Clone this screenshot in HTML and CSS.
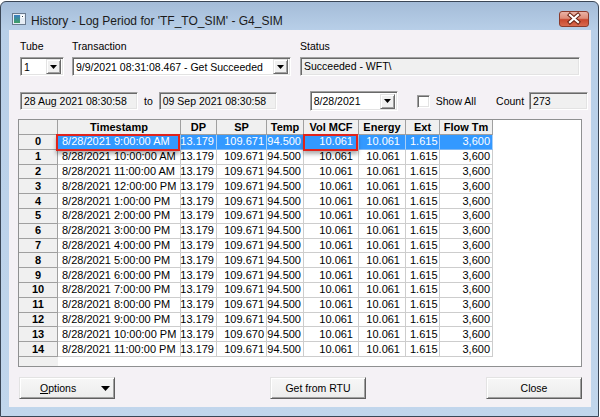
FILE: index.html
```html
<!DOCTYPE html>
<html>
<head>
<meta charset="utf-8">
<title>History</title>
<link rel="stylesheet" href="styles.css">
</head>
<body>
<div class="window">
  <div class="titlebar">
    <svg class="app-icon" width="14" height="12" viewBox="0 0 14 12">
      <defs>
        <linearGradient id="ig" x1="0" y1="0" x2="0" y2="1">
          <stop offset="0" stop-color="#3b7fc4"/>
          <stop offset="1" stop-color="#3f9f63"/>
        </linearGradient>
      </defs>
      <rect x="0.5" y="0.5" width="13" height="11" fill="#e6edf5" stroke="#6a7a8e"/>
      <rect x="2" y="2" width="6" height="8" fill="url(#ig)"/>
      <rect x="9" y="2" width="3" height="3" fill="#ffffff"/>
      <rect x="10" y="3" width="1" height="1" fill="#334455"/>
    </svg>
    <span class="title">History - Log Period for 'TF_TO_SIM' - G4_SIM</span>
    <div class="close-btn">
      <svg width="30" height="16" viewBox="0 0 30 16">
        <path d="M11 4 L19 11 M19 4 L11 11" stroke="#6b2416" stroke-width="4.2" stroke-linecap="square"/>
        <path d="M11 4 L19 11 M19 4 L11 11" stroke="#ffffff" stroke-width="2.2" stroke-linecap="square"/>
      </svg>
    </div>
  </div>

  <div class="client">
    <div class="row-top">
      <div class="field">
        <span class="label">Tube</span>
        <div class="combo w-tube"><span class="val">1</span><span class="dd"><svg width="7" height="4" viewBox="0 0 7 4"><path d="M0 0 H7 L3.5 4 Z" fill="#000"/></svg></span></div>
      </div>
      <div class="field f-trans">
        <span class="label">Transaction</span>
        <div class="combo w-trans"><span class="val">9/9/2021 08:31:08.467 - Get Succeeded</span><span class="dd"><svg width="7" height="4" viewBox="0 0 7 4"><path d="M0 0 H7 L3.5 4 Z" fill="#000"/></svg></span></div>
      </div>
      <div class="field f-status">
        <span class="label">Status</span>
        <div class="textbox w-status">Succeeded - WFT\</div>
      </div>
    </div>

    <div class="row-dates">
      <div class="textbox w-date">28 Aug 2021 08:30:58</div>
      <span class="to">to</span>
      <div class="textbox w-date">09 Sep 2021 08:30:58</div>
      <div class="combo w-dcombo"><span class="val">8/28/2021</span><span class="dd"><svg width="7" height="4" viewBox="0 0 7 4"><path d="M0 0 H7 L3.5 4 Z" fill="#000"/></svg></span></div>
      <span class="checkbox"></span>
      <span class="cb-label">Show All</span>
      <span class="count-label">Count</span>
      <div class="textbox w-count">273</div>
    </div>

    <div class="grid">
      <div class="cells">
        <div class="c fx hd"></div><div class="c fx hd">Timestamp</div><div class="c fx hd">DP</div><div class="c fx hd">SP</div><div class="c fx hd">Temp</div><div class="c fx hd">Vol MCF</div><div class="c fx hd">Energy</div><div class="c fx hd">Ext</div><div class="c fx hd">Flow Tm</div>

        <div class="c fx rh">0</div><div class="c ts sel mark">8/28/2021 9:00:00 AM</div><div class="c n sel">13.179</div><div class="c n sel">109.671</div><div class="c n sel">94.500</div><div class="c n v sel mark2">10.061</div><div class="c n v sel">10.061</div><div class="c e sel">1.615</div><div class="c n sel">3,600</div>
        <div class="c fx rh">1</div><div class="c ts">8/28/2021 10:00:00 AM</div><div class="c n">13.179</div><div class="c n">109.671</div><div class="c n">94.500</div><div class="c n v">10.061</div><div class="c n v">10.061</div><div class="c e">1.615</div><div class="c n">3,600</div>
        <div class="c fx rh">2</div><div class="c ts">8/28/2021 11:00:00 AM</div><div class="c n">13.179</div><div class="c n">109.671</div><div class="c n">94.500</div><div class="c n v">10.061</div><div class="c n v">10.061</div><div class="c e">1.615</div><div class="c n">3,600</div>
        <div class="c fx rh">3</div><div class="c ts">8/28/2021 12:00:00 PM</div><div class="c n">13.179</div><div class="c n">109.671</div><div class="c n">94.500</div><div class="c n v">10.061</div><div class="c n v">10.061</div><div class="c e">1.615</div><div class="c n">3,600</div>
        <div class="c fx rh">4</div><div class="c ts">8/28/2021 1:00:00 PM</div><div class="c n">13.179</div><div class="c n">109.671</div><div class="c n">94.500</div><div class="c n v">10.061</div><div class="c n v">10.061</div><div class="c e">1.615</div><div class="c n">3,600</div>
        <div class="c fx rh">5</div><div class="c ts">8/28/2021 2:00:00 PM</div><div class="c n">13.179</div><div class="c n">109.671</div><div class="c n">94.500</div><div class="c n v">10.061</div><div class="c n v">10.061</div><div class="c e">1.615</div><div class="c n">3,600</div>
        <div class="c fx rh">6</div><div class="c ts">8/28/2021 3:00:00 PM</div><div class="c n">13.179</div><div class="c n">109.671</div><div class="c n">94.500</div><div class="c n v">10.061</div><div class="c n v">10.061</div><div class="c e">1.615</div><div class="c n">3,600</div>
        <div class="c fx rh">7</div><div class="c ts">8/28/2021 4:00:00 PM</div><div class="c n">13.179</div><div class="c n">109.671</div><div class="c n">94.500</div><div class="c n v">10.061</div><div class="c n v">10.061</div><div class="c e">1.615</div><div class="c n">3,600</div>
        <div class="c fx rh">8</div><div class="c ts">8/28/2021 5:00:00 PM</div><div class="c n">13.179</div><div class="c n">109.671</div><div class="c n">94.500</div><div class="c n v">10.061</div><div class="c n v">10.061</div><div class="c e">1.615</div><div class="c n">3,600</div>
        <div class="c fx rh">9</div><div class="c ts">8/28/2021 6:00:00 PM</div><div class="c n">13.179</div><div class="c n">109.671</div><div class="c n">94.500</div><div class="c n v">10.061</div><div class="c n v">10.061</div><div class="c e">1.615</div><div class="c n">3,600</div>
        <div class="c fx rh">10</div><div class="c ts">8/28/2021 7:00:00 PM</div><div class="c n">13.179</div><div class="c n">109.671</div><div class="c n">94.500</div><div class="c n v">10.061</div><div class="c n v">10.061</div><div class="c e">1.615</div><div class="c n">3,600</div>
        <div class="c fx rh">11</div><div class="c ts">8/28/2021 8:00:00 PM</div><div class="c n">13.179</div><div class="c n">109.671</div><div class="c n">94.500</div><div class="c n v">10.061</div><div class="c n v">10.061</div><div class="c e">1.615</div><div class="c n">3,600</div>
        <div class="c fx rh">12</div><div class="c ts">8/28/2021 9:00:00 PM</div><div class="c n">13.179</div><div class="c n">109.671</div><div class="c n">94.500</div><div class="c n v">10.061</div><div class="c n v">10.061</div><div class="c e">1.615</div><div class="c n">3,600</div>
        <div class="c fx rh">13</div><div class="c ts">8/28/2021 10:00:00 PM</div><div class="c n">13.179</div><div class="c n">109.670</div><div class="c n">94.500</div><div class="c n v">10.061</div><div class="c n v">10.061</div><div class="c e">1.615</div><div class="c n">3,600</div>
        <div class="c fx rh">14</div><div class="c ts">8/28/2021 11:00:00 PM</div><div class="c n">13.179</div><div class="c n">109.671</div><div class="c n">94.500</div><div class="c n v">10.061</div><div class="c n v">10.061</div><div class="c e">1.615</div><div class="c n">3,600</div>
      </div>
    </div>

    <div class="row-buttons">
      <div class="btn btn-options"><span class="opt-text"><u>O</u>ptions</span><svg width="9" height="5" viewBox="0 0 9 5"><path d="M0 0 H9 L4.5 5 Z" fill="#000"/></svg></div>
      <div class="btn btn-get">Get from RTU</div>
      <div class="btn btn-close">Close</div>
    </div>
  </div>
</div>
</body>
</html>
```

FILE: styles.css
```css
* { box-sizing: border-box; }
html, body { margin: 0; padding: 0; background: #ffffff; }
body {
  font-family: "Liberation Sans", Arial, sans-serif;
  font-size: 11px;
  color: #000;
}

.window {
  margin-top: 1px;
  width: 599px;
  height: 416px;
  border: 1px solid #3a4656;
  border-radius: 6px 6px 0 0;
  background: linear-gradient(#a4bcd8 0px, #b8cfe8 28px, #c1d6ec 100%);
  padding: 0 7px 9px 8px;
  display: flex;
  flex-direction: column;
}

.titlebar {
  height: 28px;
  display: flex;
  align-items: flex-start;
  padding-left: 3px;
}
.app-icon { margin-top: 11px; flex: none; }
.title {
  margin-top: 12px;
  margin-left: 5px;
  font-size: 12px;
  line-height: 14px;
  color: #1b1b1b;
  flex: 1;
  white-space: nowrap;
}
.close-btn {
  margin-top: 9px;
  margin-right: 2px;
  width: 30px;
  height: 16px;
  border: 1px solid #8b3b2c;
  border-radius: 3px;
  background: linear-gradient(#eab3a6 0%, #de8c78 45%, #c8472e 55%, #d86a4f 100%);
  display: flex;
  overflow: hidden;
}
.close-btn svg { margin: -1px; }

.client {
  width: 582px;
  height: 377px;
  background: #f4f1f5;
  display: flex;
  flex-direction: column;
  padding-left: 11px;
  font-size: 10.5px;
}

.row-top { display: flex; margin-top: 10px; }
.field { display: flex; flex-direction: column; }
.label { height: 13px; line-height: 13px; margin-bottom: 4px; }
.f-trans { margin-left: 8px; }
.f-status { margin-left: 9px; }

.combo {
  height: 19px;
  background: #fff;
  border: 1px solid;
  border-color: #a0a0a0 #ffffff #ffffff #a0a0a0;
  box-shadow: inset 1px 1px 0 #696969, inset -1px -1px 0 #e3e3e3;
  display: flex;
  align-items: center;
  padding: 1px 2px 1px 3px;
}
.combo .val { flex: 1; white-space: nowrap; line-height: 15px; padding-top: 1px; }
.combo .dd {
  width: 15px;
  height: 15px;
  background: #f0f0f0;
  border: 1px solid;
  border-color: #e3e3e3 #696969 #696969 #e3e3e3;
  box-shadow: inset 1px 1px 0 #ffffff, inset -1px -1px 0 #a0a0a0;
  display: flex;
  align-items: center;
  justify-content: center;
  flex: none;
}
.w-tube { width: 44px; }
.w-trans { width: 219px; }
.w-dcombo { width: 88px; height: 20px; margin-left: 33px; }

.textbox {
  height: 19px;
  background: #f0f0f0;
  border: 1px solid;
  border-color: #a0a0a0 #ffffff #ffffff #a0a0a0;
  box-shadow: inset 1px 1px 0 #696969, inset -1px -1px 0 #e3e3e3;
  padding: 0 3px;
  line-height: 17px;
  white-space: nowrap;
}
.w-status { width: 280px; }
.w-date { width: 118px; height: 18px; line-height: 16px; }
.w-count { width: 59px; height: 18px; line-height: 16px; }

.row-dates {
  display: flex;
  align-items: center;
  height: 20px;
  margin-top: 15px;
}
.to { margin: 0 6px 0 6px; }
.checkbox {
  width: 13px;
  height: 13px;
  margin-left: 19px;
  background: #fff;
  border: 1px solid;
  border-color: #a0a0a0 #ffffff #ffffff #a0a0a0;
  box-shadow: inset 1px 1px 0 #696969, inset -1px -1px 0 #e3e3e3;
}
.cb-label { margin-left: 6px; }
.count-label { margin-left: 20px; margin-right: 5px; }

.grid {
  margin-top: 8px;
  margin-left: -2px;
  width: 564px;
  height: 248px;
  border: 1px solid #8f9091;
  background: linear-gradient(to right, #f0f0f0 39px, #ffffff 39px);
  font-size: 11px;
}
.cells {
  display: grid;
  grid-template-columns: 39px 123px 36px 50px 37px 55px 47px 34px 53px;
  grid-template-rows: 15px repeat(15, 14.8px);
  width: 474px;
}
.c {
  border-right: 1px solid #cdcdcd;
  border-bottom: 1px solid #cdcdcd;
  display: flex;
  align-items: center;
  white-space: nowrap;
  overflow: visible;
  background: #fff;
  line-height: 13px;
}
.fx {
  background: #f0f0f0;
  border-right-color: #a0a0a0;
  border-bottom-color: #a0a0a0;
  font-weight: bold;
  justify-content: center;
}
.hd { font-weight: bold; }
.ts { padding-left: 4px; }
.n { justify-content: flex-end; padding-right: 2px; }
.v { padding-right: 5px; }
.e { padding-left: 4px; }
.sel {
  background: #3399ff;
  color: #fff;
  border-right-color: #a8cff7;
  border-bottom-color: #7fb7f2;
}
.mark, .mark2 { position: relative; }
.mark::after, .mark2::after {
  content: "";
  position: absolute;
  top: -1px;
  bottom: -2px;
  left: -2px;
  right: 0;
  border: 2px solid #e1231b;
  box-shadow: 0 3px 4px rgba(0, 0, 0, 0.32);
}
.mark2::after { left: -1px; }

.row-buttons {
  display: flex;
  margin-top: 10px;
  height: 22px;
}
.btn {
  width: 96px;
  height: 22px;
  background: linear-gradient(#f7f7f7, #ececec);
  border: 1px solid;
  border-color: #e3e3e3 #5f5f5f #5f5f5f #e3e3e3;
  box-shadow: inset 1px 1px 0 #ffffff, inset -1px -1px 0 #a0a0a0;
  display: flex;
  align-items: center;
  justify-content: center;
  line-height: 13px;
}
.btn-options {
  margin-left: -1px;
  justify-content: flex-start;
  padding-left: 20px;
}
.btn-options svg { margin-left: 25px; }
.btn-get { margin-left: 155px; }
.btn-close { margin-left: 120px; }
```
